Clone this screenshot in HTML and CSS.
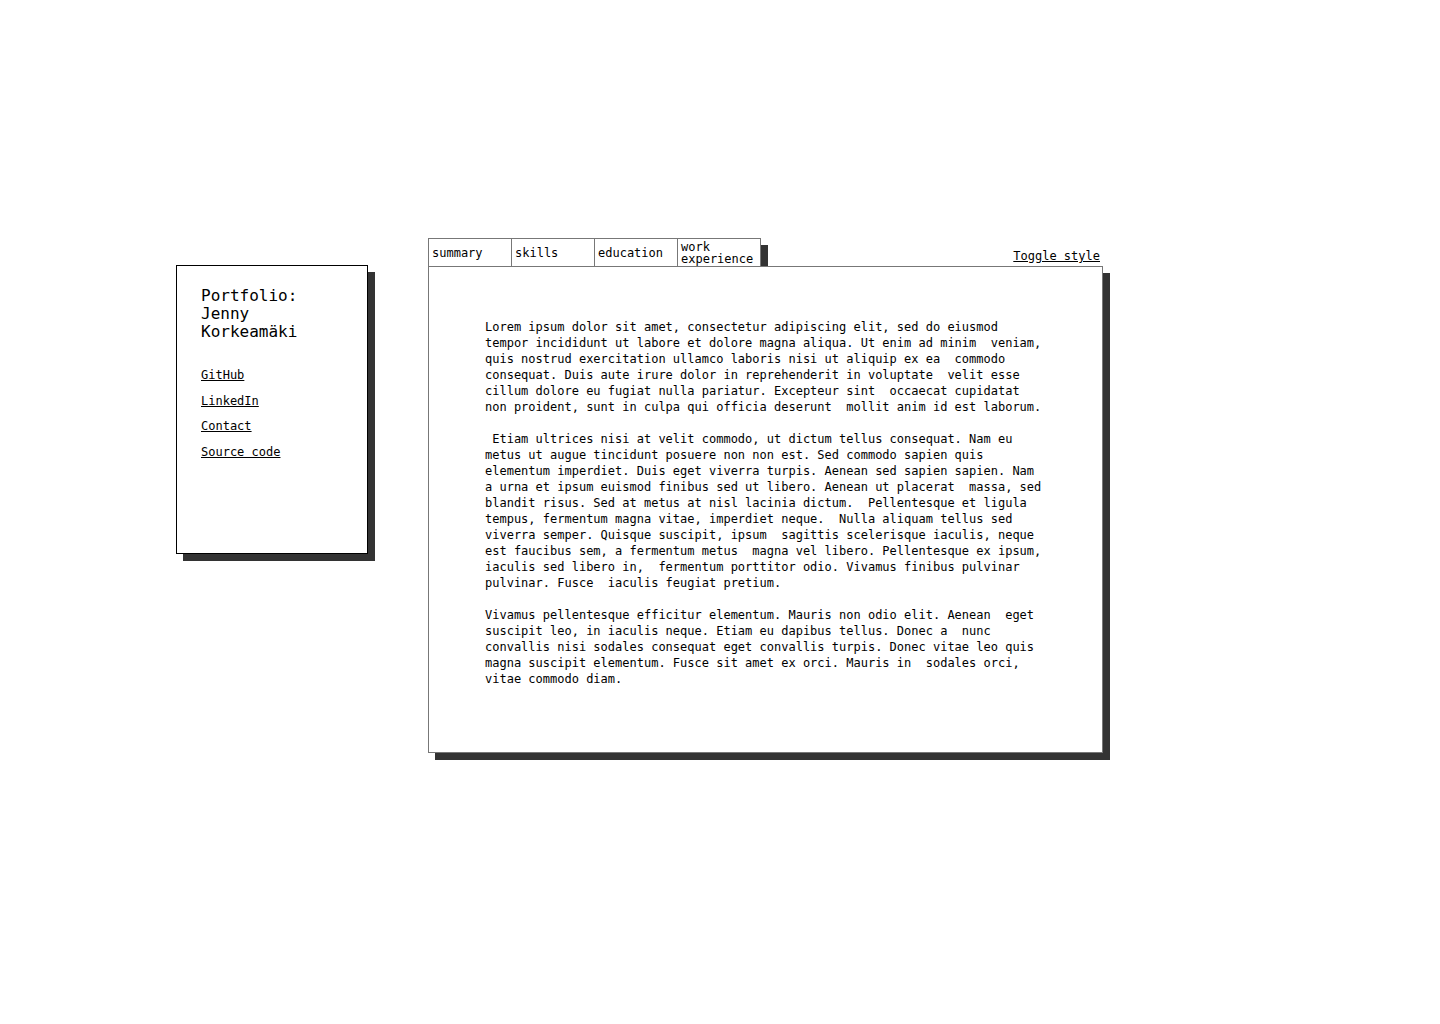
FILE: index.html
```html
<!DOCTYPE html>
<html lang="en">
<head>
    <meta charset="UTF-8">
    <meta name="viewport" content="width=device-width, initial-scale=1.0">
    <title>Portfolio: Jenny Korkeamäki</title>
    <link rel="stylesheet" href="styles.css">
</head>
<body>
    <div class="layout">
        <aside class="sidebar">
            <h1>Portfolio:<br>Jenny<br>Korkeamäki</h1>
            <nav class="links">
                <a href="#">GitHub</a>
                <a href="#">LinkedIn</a>
                <a href="#">Contact</a>
                <a href="#">Source code</a>
            </nav>
        </aside>
        <main class="main">
            <div class="topbar">
                <div class="tabs">
                    <button type="button" class="tab">summary</button>
                    <button type="button" class="tab">skills</button>
                    <button type="button" class="tab">education</button>
                    <button type="button" class="tab">work experience</button>
                </div>
                <a href="#" class="toggle">Toggle style</a>
            </div>
            <section class="panel">
<pre>Lorem ipsum dolor sit amet, consectetur adipiscing elit, sed do eiusmod
tempor incididunt ut labore et dolore magna aliqua. Ut enim ad minim  veniam,
quis nostrud exercitation ullamco laboris nisi ut aliquip ex ea  commodo
consequat. Duis aute irure dolor in reprehenderit in voluptate  velit esse
cillum dolore eu fugiat nulla pariatur. Excepteur sint  occaecat cupidatat
non proident, sunt in culpa qui officia deserunt  mollit anim id est laborum.

 Etiam ultrices nisi at velit commodo, ut dictum tellus consequat. Nam eu
metus ut augue tincidunt posuere non non est. Sed commodo sapien quis
elementum imperdiet. Duis eget viverra turpis. Aenean sed sapien sapien. Nam
a urna et ipsum euismod finibus sed ut libero. Aenean ut placerat  massa, sed
blandit risus. Sed at metus at nisl lacinia dictum.  Pellentesque et ligula
tempus, fermentum magna vitae, imperdiet neque.  Nulla aliquam tellus sed
viverra semper. Quisque suscipit, ipsum  sagittis scelerisque iaculis, neque
est faucibus sem, a fermentum metus  magna vel libero. Pellentesque ex ipsum,
iaculis sed libero in,  fermentum porttitor odio. Vivamus finibus pulvinar
pulvinar. Fusce  iaculis feugiat pretium.

Vivamus pellentesque efficitur elementum. Mauris non odio elit. Aenean  eget
suscipit leo, in iaculis neque. Etiam eu dapibus tellus. Donec a  nunc
convallis nisi sodales consequat eget convallis turpis. Donec vitae leo quis
magna suscipit elementum. Fusce sit amet ex orci. Mauris in  sodales orci,
vitae commodo diam.</pre>
            </section>
        </main>
    </div>
</body>
</html>
```

FILE: styles.css
```css
body {
    margin: 0;
    background-color: #fff;
    color: #000;
    font-family: "DejaVu Sans Mono", "Liberation Mono", monospace;
}
.layout {
    box-sizing: border-box;
    min-height: 100vh;
    display: flex;
    align-items: flex-start;
    gap: 60px;
    padding: 238px 0 0 176px;
}
.sidebar {
    box-sizing: border-box;
    width: 192px;
    height: 289px;
    margin-top: 27px;
    padding: 21px 23px 21px 24px;
    border: 1px solid #000;
    background-color: #fff;
    box-shadow: 7px 7px 0 #333;
}
.sidebar h1 {
    margin: 0;
    font-size: 16px;
    font-weight: normal;
    line-height: 18px;
}
.links {
    display: flex;
    flex-direction: column;
    gap: 9.7px;
    margin-top: 26px;
}
.links a,
.toggle {
    color: #000;
    font-size: 12px;
    line-height: 16px;
}
.main {
    width: 675px;
}
.topbar {
    display: flex;
    justify-content: space-between;
    align-items: flex-start;
}
.tabs {
    display: flex;
}
.tab {
    box-sizing: border-box;
    width: 84px;
    height: 29px;
    padding: 1px 3px 0;
    border: 1px solid #777;
    background-color: #fff;
    box-shadow: 7px 7px 0 #333;
    font-family: inherit;
    font-size: 12px;
    line-height: 12px;
    color: #000;
    text-align: left;
    cursor: pointer;
}
.tab + .tab {
    margin-left: -1px;
}
.toggle {
    margin: 10px 3px 0 0;
}
.panel {
    position: relative;
    box-sizing: border-box;
    height: 487px;
    margin-top: -1px;
    padding: 52px 0 0 56px;
    border: 1px solid #777;
    background-color: #fff;
    box-shadow: 7px 7px 0 #333;
}
.panel pre {
    margin: 0;
    font-family: inherit;
    font-size: 12px;
    line-height: 16px;
}
```
